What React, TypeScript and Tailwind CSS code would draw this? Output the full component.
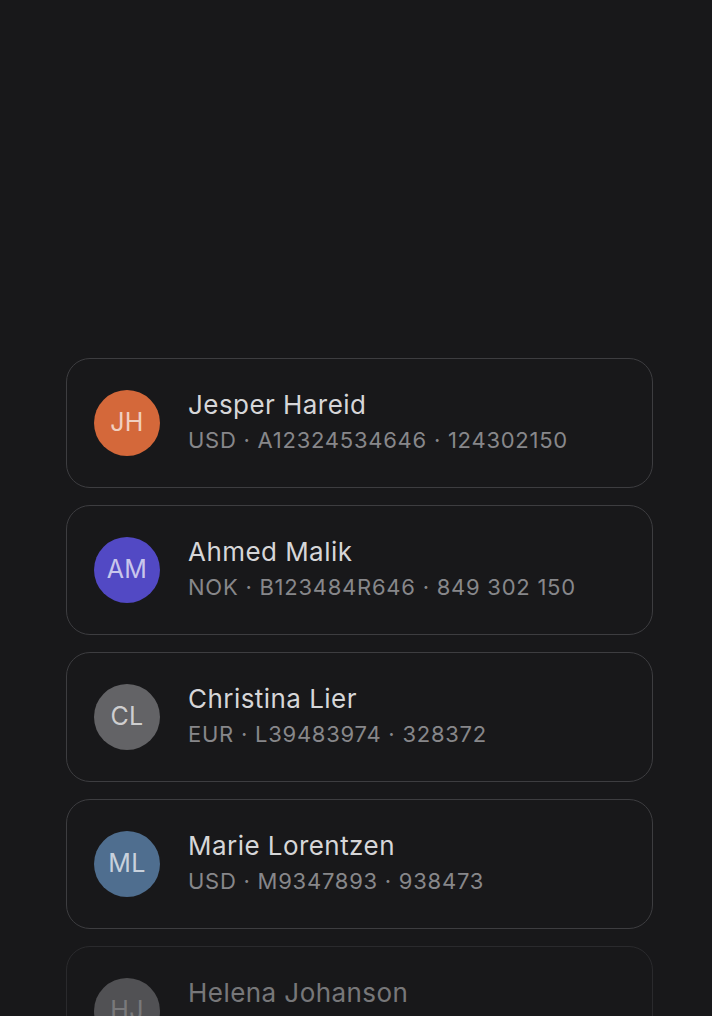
import React from 'react';

type Account = {
  initials: string;
  name: string;
  currency: string;
  code: string;
  number: string;
  color: string;
  faded?: boolean;
};

const accounts: Account[] = [
  { initials: 'JH', name: 'Jesper Hareid', currency: 'USD', code: 'A12324534646', number: '124302150', color: 'bg-[#d4683a]' },
  { initials: 'AM', name: 'Ahmed Malik', currency: 'NOK', code: 'B123484R646', number: '849 302 150', color: 'bg-[#5249c4]' },
  { initials: 'CL', name: 'Christina Lier', currency: 'EUR', code: 'L39483974', number: '328372', color: 'bg-[#636366]' },
  { initials: 'ML', name: 'Marie Lorentzen', currency: 'USD', code: 'M9347893', number: '938473', color: 'bg-[#4f6e8f]' },
  { initials: 'HJ', name: 'Helena Johanson', currency: 'SEK', code: 'H2039485', number: '102938', color: 'bg-[#8a8a8e]', faded: true },
];

const AccountCard = ({ account }: { account: Account }) => {
  return (
    <div
      className={`flex h-[130px] shrink-0 items-center gap-7 rounded-[24px] border border-[#3d3d40] bg-[#18181a] px-[27px] ${
        account.faded ? 'opacity-50' : ''
      }`}
    >
      <div
        className={`flex h-[66px] w-[66px] shrink-0 items-center justify-center rounded-full ${account.color} text-[25px] tracking-[0.3px] text-white/70`}
      >
        {account.initials}
      </div>
      <div className="flex flex-col">
        <span className="text-[26px] leading-[34px] tracking-[0.45px] text-[#d6d6d8]">{account.name}</span>
        <span className="text-[22px] leading-[36px] tracking-[0.75px] text-[#87878a]">
          {account.currency} · {account.code} · {account.number}
        </span>
      </div>
    </div>
  );
};

export default function App() {
  return (
    <div
      className="h-[1016px] w-full overflow-hidden bg-[#18181a]"
      style={{ fontFamily: 'Inter, "Noto Sans", sans-serif' }}
    >
      <div className="ml-[66px] flex w-[587px] flex-col gap-[17px] pt-[358px]">
        {accounts.map((a) => (
          <AccountCard key={a.initials} account={a} />
        ))}
      </div>
    </div>
  );
}
